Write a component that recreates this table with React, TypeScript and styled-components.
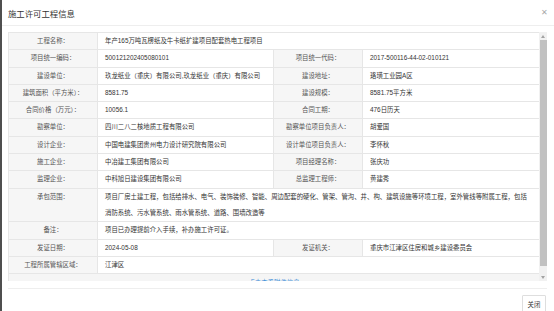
import React from "react";
import styled, { createGlobalStyle } from "styled-components";

const Global = createGlobalStyle`
  html, body { margin: 0; padding: 0; }
  body {
    background: #4f4f4f;
    font-family: "Liberation Sans", "Noto Sans CJK SC", sans-serif;
    overflow: hidden;
  }
`;

const Dialog = styled.div`
  margin-left: 2px;
  width: 552px;
  height: 311px;
  background: #fff;
  display: flex;
  flex-direction: column;
  overflow: hidden;
`;

const Header = styled.div`
  height: 25px;
  flex: none;
  border-bottom: 1px solid #eeeeee;
  display: flex;
  align-items: center;
  justify-content: space-between;
  padding: 0 6px;
`;

const Title = styled.div`
  font-size: 8.4px;
  color: #333;
  font-family: "Noto Sans CJK SC", sans-serif;
`;

const Close = styled.div`
  font-size: 8px;
  color: #a8a8a8;
  line-height: 1;
`;

const Body = styled.div`
  padding: 6px 7px 0 6px;
  flex: none;
`;

const ScrollBox = styled.div`
  height: 249px;
  display: flex;
`;

const Viewport = styled.div`
  width: 531px;
  height: 100%;
  overflow: hidden;
  flex: none;
`;

const ScrollTrack = styled.div`
  width: 8px;
  flex: none;
  display: flex;
  flex-direction: column;
  background: #f1f1f1;
`;

const ArrowButton = styled.div`
  height: 8px;
  flex: none;
  display: flex;
  align-items: center;
  justify-content: center;
`;

const ThumbArea = styled.div`
  flex: 1;
  display: flex;
  flex-direction: column;
`;

const Thumb = styled.div`
  height: 226px;
  background: #c1c1c1;
  margin: 0 0.5px;
`;

const InfoTable = styled.table`
  width: 531px;
  table-layout: fixed;
  border-collapse: collapse;
  font-size: 6.4px;
`;

const Label = styled.td`
  background: #f6f6f6;
  color: #555;
  text-align: center;
  vertical-align: top;
  line-height: 16.3px;
  padding: 0 4px;
  border: 1px solid #e6e6e6;
  white-space: nowrap;
`;

const Value = styled.td`
  background: #fff;
  color: #333;
  text-align: left;
  vertical-align: top;
  line-height: 16.3px;
  padding: 0 6px 0 7px;
  border: 1px solid #e6e6e6;
`;

const LinkCell = styled.td`
  background: #f5f5f5;
  text-align: center;
  line-height: 16.3px;
  border: 1px solid #e6e6e6;
  color: #3f8fd8;
`;

const Footer = styled.div`
  margin: 7px 7px 0 6px;
  border-top: 1px solid #eeeeee;
  padding-top: 6px;
  display: flex;
  justify-content: flex-end;
`;

const Button = styled.button`
  font-family: "Noto Sans CJK SC", sans-serif;
  font-size: 6.4px;
  color: #333;
  background: #fff;
  border: 1px solid #dedede;
  border-radius: 1px;
  height: 18px;
  width: 24px;
  padding: 0;
  margin-right: 1px;
`;

type Row =
  | { kind: "pair"; a: [string, string]; b: [string, string] }
  | { kind: "full"; a: [string, string] };

const rows: Row[] = [
  { kind: "full", a: ["工程名称：", "年产165万吨瓦楞纸及牛卡纸扩建项目配套热电工程项目"] },
  { kind: "pair", a: ["项目统一编码：", "500121202405080101"], b: ["项目统一代码：", "2017-500116-44-02-010121"] },
  { kind: "pair", a: ["建设单位：", "玖龙纸业（重庆）有限公司,玖龙纸业（重庆）有限公司"], b: ["建设地址：", "珞璜工业园A区"] },
  { kind: "pair", a: ["建筑面积（平方米）：", "8581.75"], b: ["建设规模：", "8581.75平方米"] },
  { kind: "pair", a: ["合同价格（万元）：", "10056.1"], b: ["合同工期：", "476日历天"] },
  { kind: "pair", a: ["勘察单位：", "四川二八二核地质工程有限公司"], b: ["勘察单位项目负责人：", "胡爱国"] },
  { kind: "pair", a: ["设计企业：", "中国电建集团贵州电力设计研究院有限公司"], b: ["设计单位项目负责人：", "李怀秋"] },
  { kind: "pair", a: ["施工企业：", "中冶建工集团有限公司"], b: ["项目经理名称：", "张庆功"] },
  { kind: "pair", a: ["监理企业：", "中科旭日建设集团有限公司"], b: ["总监理工程师：", "黄建秀"] },
  {
    kind: "full",
    a: [
      "承包范围：",
      "项目厂房土建工程，包括给排水、电气、装饰装修、智能、周边配套的硬化、管架、管沟、井、构、建筑设施等环境工程，室外管线等附属工程，包括消防系统、污水管系统、雨水管系统、道路、围墙改造等",
    ],
  },
  { kind: "full", a: ["备注：", "项目已办理提前介入手续，补办施工许可证。"] },
  { kind: "pair", a: ["发证日期：", "2024-05-08"], b: ["发证机关：", "重庆市江津区住房和城乡建设委员会"] },
  { kind: "full", a: ["工程所属管辖区域：", "江津区"] },
];

const Arrow = ({ up }: { up?: boolean }) => (
  <svg width="4" height="3" viewBox="0 0 4 3">
    <path d={up ? "M0 3 L2 0 L4 3 Z" : "M0 0 L4 0 L2 3 Z"} fill="#a3a3a3" />
  </svg>
);

export default function App() {
  return (
    <>
      <Global />
      <Dialog>
        <Header>
          <Title>施工许可工程信息</Title>
          <Close>✕</Close>
        </Header>
        <Body>
          <ScrollBox>
            <Viewport>
              <InfoTable>
                <colgroup>
                  <col style={{ width: 89 }} />
                  <col style={{ width: 176 }} />
                  <col style={{ width: 89 }} />
                  <col style={{ width: 177 }} />
                </colgroup>
                <tbody>
                  {rows.map((r, i) =>
                    r.kind === "pair" ? (
                      <tr key={i}>
                        <Label>{r.a[0]}</Label>
                        <Value>{r.a[1]}</Value>
                        <Label>{r.b[0]}</Label>
                        <Value>{r.b[1]}</Value>
                      </tr>
                    ) : (
                      <tr key={i}>
                        <Label>{r.a[0]}</Label>
                        <Value colSpan={3}>{r.a[1]}</Value>
                      </tr>
                    )
                  )}
                  <tr>
                    <LinkCell colSpan={4}>点击查看附件信息</LinkCell>
                  </tr>
                </tbody>
              </InfoTable>
            </Viewport>
            <ScrollTrack>
              <ArrowButton>
                <Arrow up />
              </ArrowButton>
              <ThumbArea>
                <Thumb />
              </ThumbArea>
              <ArrowButton>
                <Arrow />
              </ArrowButton>
            </ScrollTrack>
          </ScrollBox>
        </Body>
        <Footer>
          <Button>关闭</Button>
        </Footer>
      </Dialog>
    </>
  );
}
